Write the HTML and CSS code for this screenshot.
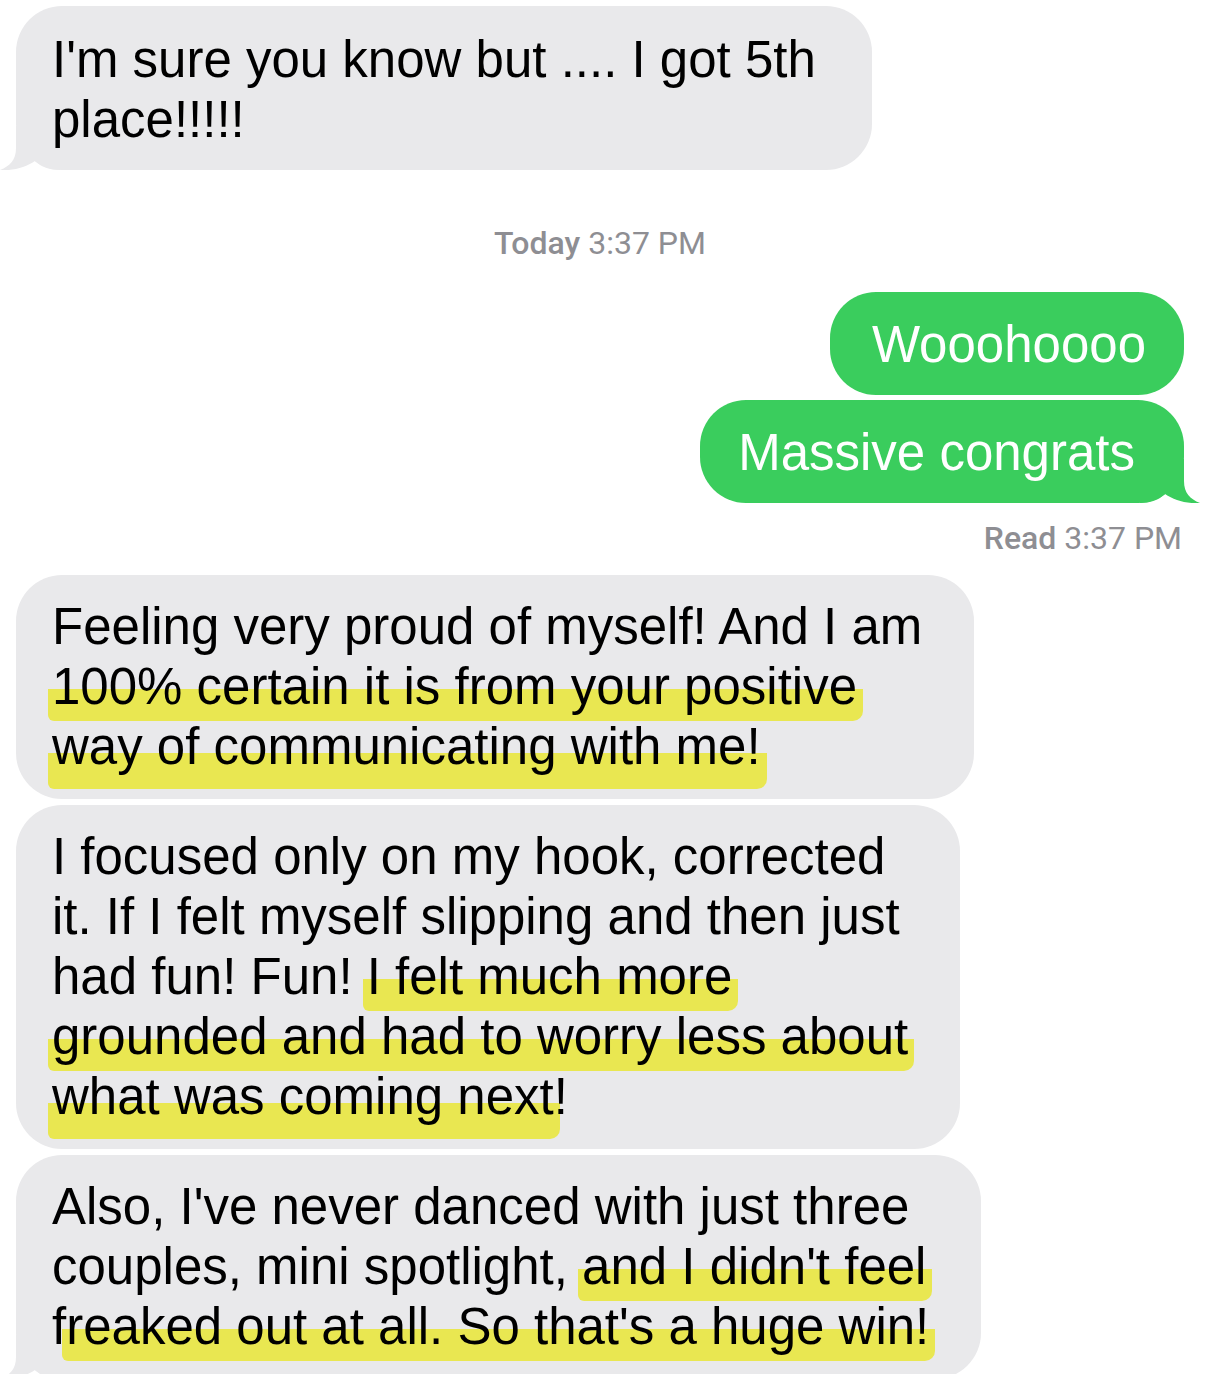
FILE: index.html
```html
<!DOCTYPE html>
<html lang="en">
  <head>
    <meta charset="UTF-8" />
    <meta name="viewport" content="width=device-width, initial-scale=1.0" />
    <title>Messages</title>
    <link rel="stylesheet" href="styles.css">
  </head>
  <body>
    <div class="thread">
      <div class="bubble in first">
        I'm sure you know but .... I got 5th<br>place!!!!!
        <svg class="tail" viewBox="0 0 60 44" width="60" height="44"><path d="M16 0 V22 C16 34 10 40 0 44 C14 45 26 41 35 35 C41 41 50 44 60 44 V0 Z" /></svg>
      </div>

      <div class="stamp today"><b>Today</b> 3:37 PM</div>

      <div class="bubble out">Wooohoooo</div>
      <div class="bubble out second">
        Massive congrats
        <svg class="tail" viewBox="0 0 60 44" width="60" height="44"><path d="M16 0 V22 C16 34 10 40 0 44 C14 45 26 41 35 35 C41 41 50 44 60 44 V0 Z" /></svg>
      </div>

      <div class="stamp read"><b>Read</b> 3:37 PM</div>

      <div class="bubble in reply">
        Feeling very proud of myself! And I am<br>
        <span class="hl">100% certain it is from your positive</span><br>
        <span class="hl deep">way of communicating with me!</span>
      </div>
      <div class="bubble in">
        I focused only on my hook, corrected<br>
        it. If I felt myself slipping and then just<br>
        had fun! Fun! <span class="hl">I felt much more</span><br>
        <span class="hl">grounded and had to worry less about</span><br>
        <span class="hl deep">what was coming next</span>!
      </div>
      <div class="bubble in">
        Also, I've never danced with just three<br>
        couples, mini spotlight, <span class="hl">and I didn't feel</span><br>
        f<span class="hl">reaked out at all. So that's a huge win!</span>
        <svg class="tail" viewBox="0 0 60 44" width="60" height="44"><path d="M16 0 V22 C16 34 10 40 0 44 C14 45 26 41 35 35 C41 41 50 44 60 44 V0 Z" /></svg>
      </div>
    </div>
  </body>
</html>
```

FILE: styles.css
```css
body {
  margin: 0;
  background: #ffffff;
  font-family: "Liberation Sans", Arial, sans-serif;
  color: #000000;
}

.thread {
  display: flex;
  flex-direction: column;
  padding: 6px 27px 0 16px;
}

.bubble {
  position: relative;
  isolation: isolate;
  font-size: 51px;
  line-height: 60px;
  padding: 22px 52px 22px 36px;
  border-radius: 46px;
}

.bubble.in {
  align-self: flex-start;
  background: #e9e9eb;
  margin-top: 6px;
}

.bubble.in.first {
  margin-top: 0;
  padding-top: 24px;
  padding-bottom: 20px;
  padding-right: 56px;
}

.bubble.in.reply {
  margin-top: 17px;
}

.bubble.in .tail {
  fill: #e9e9eb;
  left: -16px;
}

.bubble.out {
  align-self: flex-end;
  background: #3acd5d;
  color: #ffffff;
  padding: 23px 38px 20px 42px;
  margin-top: 29px;
}

.bubble.out.second {
  margin-top: 5px;
  padding-right: 49px;
  padding-left: 38px;
}

.bubble.out .tail {
  fill: #3acd5d;
  right: -16px;
  transform: scaleX(-1);
}

.tail {
  position: absolute;
  bottom: 0;
  z-index: -1;
}

.stamp {
  font-family: Roboto, "Liberation Sans", sans-serif;
  font-size: 32px;
  line-height: 40px;
  color: #8e8e93;
}

.stamp b {
  font-weight: 500;
}

.stamp.today {
  align-self: center;
  margin-top: 53px;
}

.stamp.read {
  align-self: flex-end;
  margin-top: 15px;
  margin-right: 2px;
}

/* marker strokes, multiplied so the text stays dark */
.hl {
  background: linear-gradient(to bottom, transparent 50%, #fffd58 50%, #fffd58 100%);
  padding: 0 6px 6px 4px;
  margin: 0 -6px 0 -4px;
  border-radius: 4px 10px 10px 6px;
  -webkit-box-decoration-break: clone;
  box-decoration-break: clone;
  mix-blend-mode: multiply;
}

.hl.deep {
  padding-bottom: 14px;
}
```
